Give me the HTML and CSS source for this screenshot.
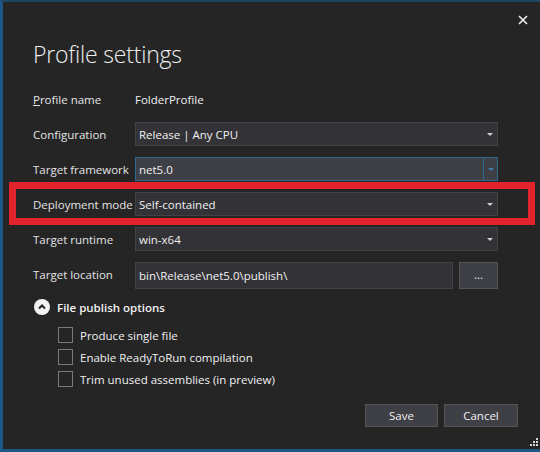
FILE: index.html
```html
<!DOCTYPE html>
<html>
<head>
<meta charset="utf-8">
<link rel="stylesheet" href="styles.css">
</head>
<body>
<div class="dialog">
  <div class="close">
    <svg width="10" height="10" viewBox="0 0 10 10"><path d="M1 1L9 9M9 1L1 9" stroke="#f0f0f0" stroke-width="1.6"/></svg>
  </div>
  <h1 class="title">Profile settings</h1>
  <div class="form">
    <div class="label"><span class="ul">P</span>rofile name</div>
    <div class="value">FolderProfile</div>

    <div class="label">Configuration</div>
    <div class="combo"><span>Release | Any CPU</span><i class="arrow"></i></div>

    <div class="label">Target framework</div>
    <div class="combo focus"><span>net5.0</span><div class="dropbtn"><i class="arrow blue"></i></div></div>

    <div class="label hl-row">Deployment mode<div class="highlight"></div></div>
    <div class="combo"><span>Self-contained</span><i class="arrow"></i></div>

    <div class="label">Target runtime</div>
    <div class="combo"><span>win-x64</span><i class="arrow"></i></div>

    <div class="label">Target location</div>
    <div class="loc">
      <div class="textbox">bin\Release\net5.0\publish\</div>
      <div class="browse">...</div>
    </div>
  </div>

  <div class="expander">
    <span class="circle"><svg width="10" height="10" viewBox="0 0 10 10"><path d="M2 6.5L5 3.5L8 6.5" fill="none" stroke="#252526" stroke-width="2"/></svg></span>
    <span class="exp-text">File publish options</span>
  </div>
  <div class="checks">
    <div class="check"><span class="box"></span>Produce single file</div>
    <div class="check"><span class="box"></span>Enable ReadyToRun compilation</div>
    <div class="check"><span class="box"></span>Trim unused assemblies (in preview)</div>
  </div>

  <div class="buttons">
    <div class="btn">Save</div>
    <div class="btn">Cancel</div>
  </div>
  <div class="grip">
    <svg width="10" height="10" viewBox="0 0 10 10" fill="#d8d8d8">
      <rect x="8" y="0" width="2" height="2"/>
      <rect x="5" y="3" width="2" height="2"/><rect x="8" y="3" width="2" height="2"/>
      <rect x="2" y="6" width="2" height="2"/><rect x="5" y="6" width="2" height="2"/><rect x="8" y="6" width="2" height="2"/>
    </svg>
  </div>
</div>
</body>
</html>
```
FILE: styles.css
```css
html, body {
  margin: 0;
  padding: 0;
  background: #252526;
}
.dialog {
  position: relative;
  box-sizing: border-box;
  width: 540px;
  height: 452px;
  background: #252526;
  border-top: 2px solid #1b4560;
  border-left: 3px solid #1d5888;
  border-bottom: 3px solid #1d5888;
  padding: 36px 42px 0 30px;
  font-family: "Open Sans", "Noto Sans", sans-serif;
  font-size: 11.5px;
  color: #e6e6e6;
  display: flex;
  flex-direction: column;
}
.close {
  position: absolute;
  top: 13px;
  right: 12px;
  width: 10px;
  height: 10px;
}
.close svg { display: block; }
.title {
  margin: 0;
  font-weight: 300;
  font-size: 23px;
  line-height: 32px;
  color: #f0f0f0;
  letter-spacing: -0.2px;
}
.form {
  margin-top: 17px;
  display: grid;
  grid-template-columns: 102px 363px;
  grid-auto-rows: 24px;
  row-gap: 11px;
  align-items: center;
}
.label {
  color: #e4e4e4;
  white-space: nowrap;
}
.ul { text-decoration: underline; }
.value {
  color: #f1f1f1;
}
.combo {
  box-sizing: border-box;
  height: 24px;
  background: #333337;
  border: 1px solid #434346;
  display: flex;
  align-items: center;
  padding-left: 3px;
  color: #f1f1f1;
  position: relative;
}
.combo span { flex: 1; }
.arrow {
  display: block;
  width: 0;
  height: 0;
  border-left: 3px solid transparent;
  border-right: 3px solid transparent;
  border-top: 3px solid #d0d0d0;
  margin-right: 4px;
}
.combo.focus {
  background: #3f3f46;
  border-color: #2d6a92;
}
.dropbtn {
  align-self: stretch;
  width: 13px;
  border-left: 1px solid #2d6a92;
  display: flex;
  align-items: center;
  justify-content: center;
}
.dropbtn .arrow { margin-right: 0; }
.arrow.blue { border-top-color: #3b7fb0; }
.hl-row { position: relative; }
.highlight {
  position: absolute;
  left: -24px;
  top: -15px;
  width: 526px;
  height: 43px;
  box-sizing: border-box;
  border: 7px solid #e3232b;
  pointer-events: none;
}
.loc {
  display: flex;
  gap: 6px;
  height: 27px;
  align-self: start;
}
.textbox {
  box-sizing: border-box;
  width: 318px;
  height: 27px;
  background: #333337;
  border: 1px solid #434346;
  padding-left: 3px;
  display: flex;
  align-items: center;
  color: #f1f1f1;
}
.browse {
  box-sizing: border-box;
  width: 39px;
  height: 27px;
  background: #3f3f46;
  border: 1px solid #555558;
  display: flex;
  align-items: center;
  justify-content: center;
  color: #f1f1f1;
  line-height: 1;
  padding-bottom: 2px;
}
.expander {
  margin-top: 12px;
  display: flex;
  align-items: center;
  height: 18px;
}
.circle {
  width: 16px;
  height: 16px;
  border-radius: 50%;
  background: #f2f2f2;
  display: flex;
  align-items: center;
  justify-content: center;
  margin-left: 1px;
}
.circle svg { display: block; }
.exp-text {
  margin-left: 7px;
  font-weight: 600;
  color: #f1f1f1;
}
.checks {
  margin-top: 11px;
  padding-left: 25px;
  display: flex;
  flex-direction: column;
  gap: 6px;
}
.check {
  display: flex;
  align-items: center;
  height: 16px;
  color: #f1f1f1;
}
.box {
  box-sizing: border-box;
  width: 15px;
  height: 16px;
  border: 1px solid #7a7a7a;
  margin-right: 7px;
}
.buttons {
  margin-top: 17px;
  display: flex;
  justify-content: flex-end;
  gap: 6px;
  margin-right: -20px;
}
.btn {
  box-sizing: border-box;
  width: 73px;
  height: 23px;
  background: #3f3f46;
  border: 1px solid #555558;
  display: flex;
  align-items: center;
  justify-content: center;
  color: #f1f1f1;
}
.buttons .btn:last-child { width: 74px; }
.grip {
  position: absolute;
  right: 2px;
  bottom: 1px;
  width: 10px;
  height: 10px;
}
.grip svg { display: block; }
```
